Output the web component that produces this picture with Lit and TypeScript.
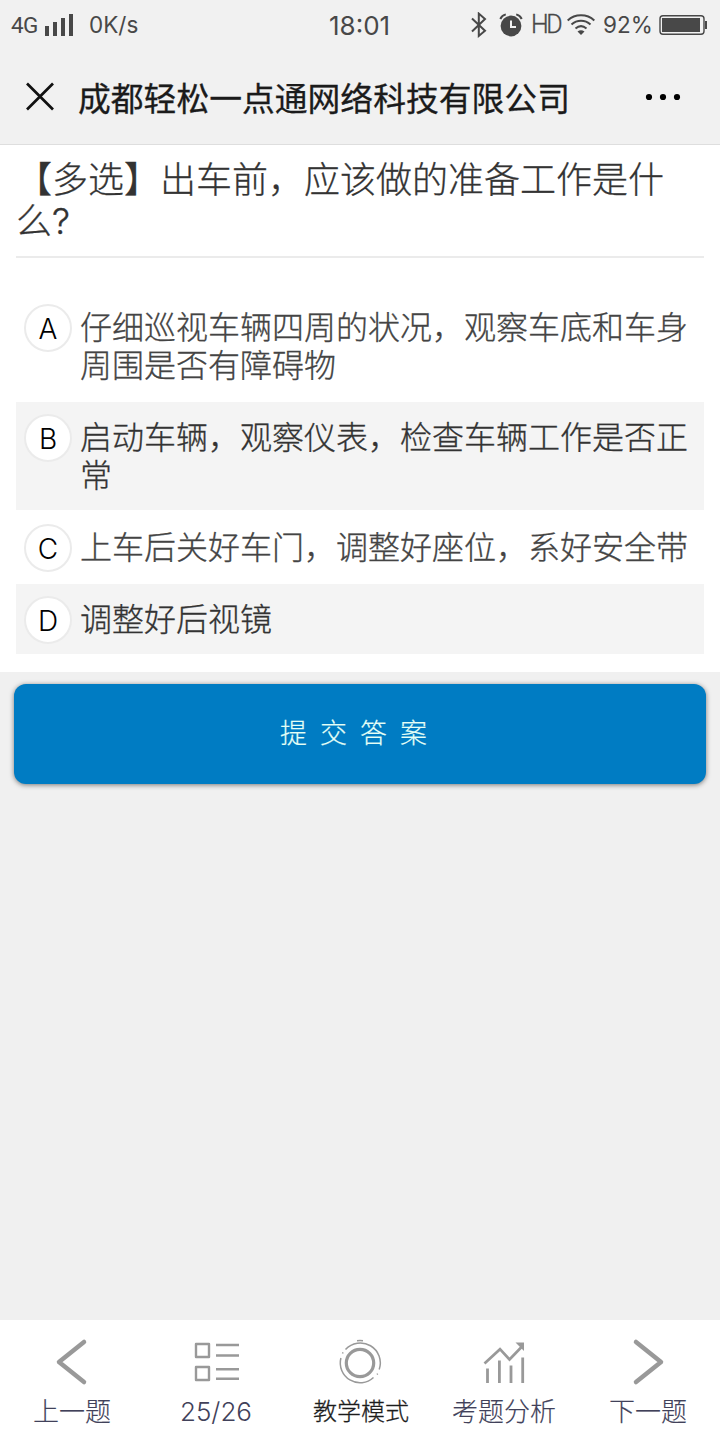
import { LitElement, html, css, svg } from "lit";
import { customElement, property } from "lit/decorators.js";
import { classMap } from "lit/directives/class-map.js";

@customElement("status-bar")
class StatusBar extends LitElement {
  static styles = css`
    :host { display: flex; align-items: center; height: 50px; color: #484848; font-family: Inter, "Liberation Sans", sans-serif; font-size: 22px; line-height: 50px; white-space: nowrap; }
    svg { display: block; flex: none; }
    span { flex: none; }
    .net { width: 33px; margin-left: 11px; font-family: Roboto, sans-serif; font-size: 22.5px; letter-spacing: -0.7px; }
    .speed { width: 240px; margin-left: 15px; font-size: 22.5px; letter-spacing: 0; }
    .clock { width: 141px; font-size: 26px; letter-spacing: 0; padding-top: 2px; }
    .alarm { margin-left: 11px; }
    .hd { width: 30px; margin-left: 8px; font-family: Roboto, sans-serif; font-weight: 300; font-size: 25px; letter-spacing: -2.5px; -webkit-text-stroke: 0.3px currentColor; }
    .wifi { margin-left: 6px; }
    .pct { width: 51px; margin-left: 8px; font-size: 22.5px; letter-spacing: 0; }
    .battery { margin-left: 5px; }
  `;
  render() {
    return html`
      <span class="net">4G</span>
      <svg width="30" height="24" viewBox="0 0 30 24" fill="#484848"><path d="M1 13h4v10H1zM9 9h4v14H9zM17 5h4v18h-4zM25 1h4v22h-4z"/></svg>
      <span class="speed">0K/s</span>
      <span class="clock">18:01</span>
      <svg width="18" height="26" viewBox="0 0 18 26" fill="none" stroke="#484848" stroke-width="2"><path d="M2 6.500l13 12.200-6.200 5.200V1.600L15 7 2 19.500"/></svg>
      <svg class="alarm" width="24" height="24" viewBox="0 0 24 24"><circle cx="12" cy="13" r="10.400" fill="#484848"/><path d="M1.300 6a8 8 0 0 1 5.500-4.600M22.700 6a8 8 0 0 0-5.500-4.600" fill="none" stroke="#484848" stroke-width="2"/><path d="M12 7.500v6.500h5" fill="none" stroke="#f1f1f1" stroke-width="2"/></svg>
      <span class="hd">HD</span>
      <svg class="wifi" width="28" height="22" viewBox="0 0 28 22" fill="none" stroke="#484848" stroke-width="2"><path d="M.7 6.500C8-.4 20-.4 27.300 6.500M4.500 10.500c5.500-5 13.500-5 19 0M8.500 14.500c3.500-3 7.500-3 11 0"/><path d="M10.500 17.500q3.500-2.400 7 0L14 21z" fill="#484848" stroke="none"/></svg>
      <span class="pct">92%</span>
      <svg class="battery" width="49" height="22" viewBox="0 0 49 22"><rect x="1" y="1.700" width="44" height="18.600" rx="3" fill="none" stroke="#484848" stroke-width="1.400"/><path d="M3 4h38v14H3z" fill="#484848"/><path d="M46 7h2v8h-2z" fill="#484848"/></svg>
    `;
  }
}

@customElement("nav-header")
class NavHeader extends LitElement {
  static styles = css`
    :host { display: flex; align-items: center; height: 94px; border-bottom: 1px solid #dedede; color: #1b1b1b; box-sizing: content-box; }
    .close { margin-left: 25px; }
    .title { flex: 1; margin-left: 23px; font: 400 32.800px/48px "Noto Sans CJK SC", sans-serif; -webkit-text-stroke: 0.3px currentColor; white-space: nowrap; }
    .more { margin-right: 38px; }
    svg { display: block; flex: none; }
  `;
  render() {
    return html`
      <svg class="close" width="30" height="30" viewBox="0 0 30 30" stroke="#111" stroke-width="2.700"><path d="M2 1.500l26 26M28 1.500L2 27.500"/></svg>
      <div class="title">成都轻松一点通网络科技有限公司</div>
      <svg class="more" width="38" height="8" viewBox="0 0 38 8"><circle cx="5" cy="4" r="3.100"/><circle cx="19" cy="4" r="3.100"/><circle cx="33" cy="4" r="3.100"/></svg>
    `;
  }
}

@customElement("answer-option")
class AnswerOption extends LitElement {
  @property() letter = "";
  @property() text = "";
  @property({ type: Boolean }) shaded = false;
  static styles = css`
    .row { display: flex; align-items: flex-start; box-sizing: border-box; min-height: 70px; padding: 12px 8px 10px; margin-bottom: 2px; color: #444; }
    .shaded { background: #f4f4f4; color: #333; }
    .badge { flex: none; box-sizing: border-box; width: 48px; height: 48px; border: 2px solid #ebebeb; border-radius: 50%; background: #fff; color: #000; font: 300 28px/46px Inter, sans-serif; text-align: center; }
    .text { margin: 2px -8px 8px 8px; font: 300 32px/38px "Noto Sans CJK SC", sans-serif; -webkit-text-stroke: 0.3px currentColor; }
  `;
  render() {
    return html`<div class=${classMap({ row: true, shaded: this.shaded })}><div class="badge">${this.letter}</div><div class="text">${this.text}</div></div>`;
  }
}

const icons: Record<string, unknown> = {
  prev: svg`<path d="M37 4L12 24l25 20" stroke-width="4.500" stroke-linecap="round" stroke-linejoin="round"/>`,
  list: svg`<path d="M5 6h13v13H5zM5 29h13v13H5z" stroke-width="2.400" stroke-linejoin="round"/><path d="M25 7h23M25 17.500h23M25 31.300h23M25 40.700h23" stroke-width="2.500"/>`,
  mode: svg`<circle cx="25" cy="25" r="13.700" stroke-width="3.200"/><path d="M5.900 20A19.800 19.800 0 0 0 38.500 39.500M44.200 31.500A20 20 0 0 0 10.500 11.500M7.500 15.500l.6-1.200M42 36.500l.7-.9M22 2.700q3-.3 6 0" stroke-width="1.500"/>`,
  chart: svg`<path d="M5.500 25.500L21 11.200l9.500 10.300L44 7.500" stroke-width="2.700"/><path d="M8.500 30.500V45M20.400 22.500V45M32 27.500V45M43.700 19.500V45" stroke-width="2.800"/><path d="M36.500 4.500H45v8.500z" fill="#999" stroke="none"/>`,
  next: svg`<path d="M13 4l25 20-25 20" stroke-width="4.500" stroke-linecap="round" stroke-linejoin="round"/>`,
};

@customElement("tab-bar")
class TabBar extends LitElement {
  static styles = css`
    :host { display: grid; grid-template-columns: repeat(5, 1fr); height: 120px; background: #fff; }
    .tab { display: flex; flex-direction: column; align-items: center; padding-top: 18px; color: #41415a; font: 300 26px/40px Inter, sans-serif; white-space: nowrap; }
    .cjk { font-family: "Noto Sans CJK SC", sans-serif; -webkit-text-stroke: 0.15px currentColor; }
    .cjk svg { margin-bottom: 2px; }
    .current { color: #1c1c1c; font-size: 24px; -webkit-text-stroke: 0.3px currentColor; }
    .current span { padding-left: 2px; }
    svg { display: block; width: 50px; height: 50px; margin-bottom: 4px; fill: none; stroke: #999; flex: none; }
  `;
  tabs = [
    { icon: "prev", label: "上一题" },
    { icon: "list", label: "25/26" },
    { icon: "mode", label: "教学模式" },
    { icon: "chart", label: "考题分析" },
    { icon: "next", label: "下一题" },
  ];
  render() {
    return this.tabs.map(
      (t) => html`<div class=${classMap({ tab: true, cjk: t.icon !== "list", current: t.icon === "mode" })}>
        <svg viewBox="0 0 50 50">${icons[t.icon]}</svg><span>${t.label}</span>
      </div>`
    );
  }
}

@customElement("app-root")
class AppRoot extends LitElement {
  static styles = css`
    :host { display: flex; flex-direction: column; height: 1440px; width: 720px; background: #f0f0f0; overflow: hidden; }
    .top { background: #f1f1f1; }
    .card { box-sizing: border-box; height: 527px; background: #fff; padding: 15px 16px 0; }
    .question { box-sizing: border-box; height: 98px; border-bottom: 2px solid #ebebeb; color: #333; font: 300 36px/41px Inter, "Noto Sans CJK SC", sans-serif; -webkit-text-stroke: 0.3px currentColor; margin-bottom: 34px; }
    .submit { display: block; box-sizing: border-box; margin: 12px 14px 0; height: 100px; padding: 0 0 4px; border: 0; border-radius: 12px; background: #007cc3; color: #e4fff6; box-shadow: 0 1px 5px rgba(0, 0, 0, 0.5); font: 300 27px/96px "Noto Sans CJK SC", sans-serif; letter-spacing: 13px; text-align: center; -webkit-text-stroke: 0.2px currentColor; }
    .space { flex: 1; }
  `;
  options = [
    { letter: "A", text: "仔细巡视车辆四周的状况，观察车底和车身周围是否有障碍物" },
    { letter: "B", text: "启动车辆，观察仪表，检查车辆工作是否正常" },
    { letter: "C", text: "上车后关好车门，调整好座位，系好安全带" },
    { letter: "D", text: "调整好后视镜" },
  ];
  render() {
    return html`
      <div class="top"><status-bar></status-bar><nav-header></nav-header></div>
      <div class="card">
        <div class="question">【多选】出车前，应该做的准备工作是什么?</div>
        ${this.options.map((o, i) => html`<answer-option .letter=${o.letter} .text=${o.text} .shaded=${i % 2 === 1}></answer-option>`)}
      </div>
      <button class="submit">提交答案</button>
      <div class="space"></div>
      <tab-bar></tab-bar>
    `;
  }
}
